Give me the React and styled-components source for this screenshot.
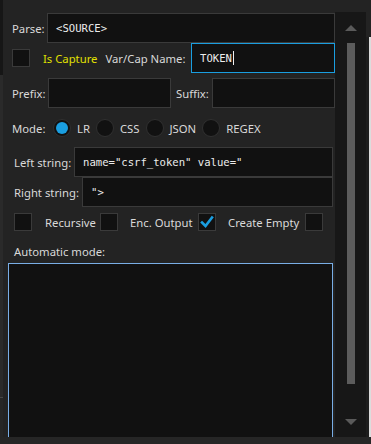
import React from 'react';
import styled, { createGlobalStyle } from 'styled-components';

const Global = createGlobalStyle`
  html, body {
    margin: 0;
    padding: 0;
    background: #232323;
    overflow: hidden;
  }
  * {
    box-sizing: border-box;
  }
`;

const Frame = styled.div`
  width: 371px;
  height: 444px;
  display: flex;
  flex-direction: column;
  background: #232323;
  font-family: 'Noto Sans', 'Open Sans', sans-serif;
  font-size: 11.3px;
  color: #d9d9d9;
  overflow: hidden;
`;

const Body = styled.div`
  flex: 1;
  display: flex;
  min-height: 0;
`;

const LeftEdge = styled.div`
  width: 3px;
  background: linear-gradient(
    to bottom,
    #161616 0,
    #161616 75px,
    #2a2a2a 75px,
    #2a2a2a 397px,
    #474747 397px,
    #474747 398px,
    #262626 398px
  );
`;

const RightEdge = styled.div`
  width: 5px;
  margin-top: 37px;
  background: linear-gradient(to right, #1d1d1d 0, #1d1d1d 3px, #dcdcdc 3px);
`;

const BottomStrip = styled.div`
  height: 7px;
  background: #262626;
`;

const Content = styled.div`
  width: 332px;
  display: flex;
  flex-direction: column;
  padding: 13px 0 0 9px;
`;

const Row = styled.div`
  display: flex;
  align-items: center;
  height: ${p => p.$h || 30}px;
  margin-top: ${p => p.$mt || 0}px;
  padding-left: ${p => p.$pl || 0}px;
  padding-right: ${p => p.$pr || 0}px;
  gap: ${p => p.$gap || 0}px;
`;

const Label = styled.span`
  flex: 0 0 ${p => (p.$w ? `${p.$w}px` : 'auto')};
  margin-left: ${p => p.$ml || 0}px;
  color: ${p => p.$color || '#d9d9d9'};
  white-space: nowrap;
`;

const Input = styled.div`
  flex: ${p => (p.$w ? `0 0 ${p.$w}px` : '1')};
  margin-left: ${p => (p.$auto ? 'auto' : '0')};
  height: 100%;
  display: flex;
  align-items: center;
  padding-left: 8px;
  background: #111111;
  border: 1px solid ${p => (p.$focus ? '#1a9ee0' : '#3a3a3a')};
  font-family: 'DejaVu Sans Mono', 'Liberation Mono', monospace;
  font-size: 10.6px;
  color: #ececec;
  white-space: pre;
`;

const Caret = styled.span`
  display: inline-block;
  width: 1px;
  height: 14px;
  background: #f0f0f0;
  margin-left: 1px;
`;

const Box = styled.div`
  flex: 0 0 18px;
  width: 18px;
  height: 18px;
  background: #111111;
  border: 1px solid #3a3a3a;
  margin-left: ${p => p.$ml || 0}px;
  display: flex;
  align-items: center;
  justify-content: center;
`;

const Radio = styled.div`
  flex: 0 0 18px;
  width: 18px;
  height: 18px;
  border-radius: 50%;
  background: #111111;
  border: 1px solid #303030;
  display: flex;
  align-items: center;
  justify-content: center;

  &::after {
    content: '';
    width: 12px;
    height: 12px;
    border-radius: 50%;
    background: ${p => (p.$on ? '#1a9ee0' : 'transparent')};
  }
`;

const Option = styled.div`
  display: flex;
  align-items: center;
  gap: 6px;
`;

const TextArea = styled.div`
  flex: 1;
  margin: 4px 2px 0 -4px;
  background: #111111;
  border: 1px solid #79aee6;
  border-bottom: none;
`;

const Scrollbar = styled.div`
  width: 31px;
  margin-top: 12px;
  background: #171717;
  display: flex;
  flex-direction: column;
  align-items: center;
  padding-top: 13px;
`;

const Arrow = styled.div`
  width: 0;
  height: 0;
  border-left: 6px solid transparent;
  border-right: 6px solid transparent;
  ${p =>
    p.$down
      ? 'border-top: 6px solid #5a5a5a; margin-top: 35px;'
      : 'border-bottom: 6px solid #5a5a5a;'}
`;

const Thumb = styled.div`
  width: 8px;
  height: 341px;
  margin-top: 12px;
  background: #5c5c5c;
`;

const Check = () => (
  <svg width="16" height="16" viewBox="0 0 16 16">
    <path d="M3 8.5 L6.5 12 L13 3.5" fill="none" stroke="#1a9ee0" strokeWidth="2.6" strokeLinecap="square" />
  </svg>
);

const modes = [
  { name: 'LR', on: true },
  { name: 'CSS' },
  { name: 'JSON' },
  { name: 'REGEX' },
];

export default function App() {
  return (
    <Frame>
      <Global />
      <Body>
        <LeftEdge />
        <Content>
          <Row>
            <Label $w={35}>Parse:</Label>
            <Input>{'<SOURCE>'}</Input>
          </Row>
          <Row>
            <Box />
            <Label $ml={13} $color="#e0e000">Is Capture</Label>
            <Label $ml={8}>Var/Cap Name:</Label>
            <Input $w={144} $auto $focus>
              TOKEN<Caret />
            </Input>
          </Row>
          <Row $mt={5}>
            <Label $w={36}>Prefix:</Label>
            <Input $w={123} />
            <Label $w={36} $ml={5}>Suffix:</Label>
            <Input />
          </Row>
          <Row $h={18} $mt={11} $gap={6}>
            <Label $w={35}>Mode:</Label>
            {modes.map(m => (
              <Option key={m.name}>
                <Radio $on={m.on} />
                <Label>{m.name}</Label>
              </Option>
            ))}
          </Row>
          <Row $mt={10} $pl={2} $pr={2}>
            <Label $w={60}>Left string:</Label>
            <Input>name="csrf_token" value="</Input>
          </Row>
          <Row $pl={2} $pr={2}>
            <Label $w={68}>Right string:</Label>
            <Input>{'">'}</Input>
          </Row>
          <Row $h={18} $mt={6} $pl={2}>
            <Box />
            <Label $w={55} $ml={13}>Recursive</Label>
            <Box />
            <Label $w={68} $ml={12}>Enc. Output</Label>
            <Box>
              <Check />
            </Box>
            <Label $w={77} $ml={12}>Create Empty</Label>
            <Box />
          </Row>
          <Row $h={16} $mt={12} $pl={2}>
            <Label>Automatic mode:</Label>
          </Row>
          <TextArea />
        </Content>
        <Scrollbar>
          <Arrow />
          <Thumb />
          <Arrow $down />
        </Scrollbar>
        <RightEdge />
      </Body>
      <BottomStrip />
    </Frame>
  );
}
